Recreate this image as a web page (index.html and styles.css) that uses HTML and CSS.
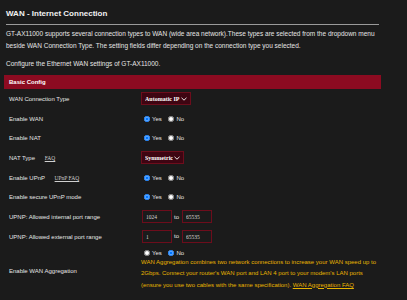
FILE: index.html
```html
<!DOCTYPE html>
<html>
<head>
  <meta charset="UTF-8">
  <title>WAN - Internet Connection</title>
  <link rel="stylesheet" href="styles.css">
</head>
<body>
  <div class="content">
    <h1 class="title">WAN - Internet Connection</h1>
    <hr class="rule">
    <p class="desc">GT-AX11000 supports several connection types to WAN (wide area network).These types are selected from the dropdown menu beside WAN Connection Type. The setting fields differ depending on the connection type you selected.</p>
    <p class="note">Configure the Ethernet WAN settings of GT-AX11000.</p>

    <table class="form-table">
      <thead>
        <tr><th colspan="2">Basic Config</th></tr>
      </thead>
      <tbody>
        <tr>
          <td class="label">WAN Connection Type</td>
          <td>
            <select class="select">
              <option selected>Automatic IP</option>
              <option>PPPoE</option>
              <option>Static IP</option>
            </select>
          </td>
        </tr>
        <tr>
          <td class="label">Enable WAN</td>
          <td>
            <input type="radio" name="wan" checked><span class="opt">Yes</span>
            <input type="radio" name="wan"><span class="opt">No</span>
          </td>
        </tr>
        <tr>
          <td class="label">Enable NAT</td>
          <td>
            <input type="radio" name="nat" checked><span class="opt">Yes</span>
            <input type="radio" name="nat"><span class="opt">No</span>
          </td>
        </tr>
        <tr>
          <td class="label">NAT Type <a class="faq" href="#">FAQ</a></td>
          <td>
            <select class="select">
              <option selected>Symmetric</option>
              <option>Fullcone</option>
            </select>
          </td>
        </tr>
        <tr>
          <td class="label">Enable UPnP <a class="faq" href="#">UPnP FAQ</a></td>
          <td>
            <input type="radio" name="upnp" checked><span class="opt">Yes</span>
            <input type="radio" name="upnp"><span class="opt">No</span>
          </td>
        </tr>
        <tr>
          <td class="label">Enable secure UPnP mode</td>
          <td>
            <input type="radio" name="secure" checked><span class="opt">Yes</span>
            <input type="radio" name="secure"><span class="opt">No</span>
          </td>
        </tr>
        <tr>
          <td class="label">UPNP: Allowed internal port range</td>
          <td>
            <input class="port" type="text" value="1024"><span class="to">to</span><input class="port" type="text" value="65535">
          </td>
        </tr>
        <tr>
          <td class="label">UPNP: Allowed external port range</td>
          <td>
            <input class="port" type="text" value="1"><span class="to">to</span><input class="port" type="text" value="65535">
          </td>
        </tr>
        <tr class="tall">
          <td class="label">Enable WAN Aggregation</td>
          <td>
            <div>
              <input type="radio" name="agg"><span class="opt">Yes</span>
              <input type="radio" name="agg" checked><span class="opt">No</span>
            </div>
            <div class="hint">WAN Aggregation combines two network connections to increase your WAN speed up to 2Gbps. Connect your router's WAN port and LAN 4 port to your modem's LAN ports (ensure you use two cables with the same specification). <a href="#">WAN Aggregation FAQ</a></div>
          </td>
        </tr>
      </tbody>
    </table>
  </div>
</body>
</html>
```

FILE: styles.css
```css
body {
  margin: 0;
  background-color: #1b1b1b;
  color: #e6e6e6;
  font-family: "Liberation Sans", Arial, sans-serif;
  font-size: 6px;
}

.content {
  width: 377px;
  padding: 9px 0 0 4px;
}

.title {
  margin: 0 2px;
  font-size: 8px;
  line-height: 10px;
  font-weight: bold;
  color: #f2f2f2;
}

.rule {
  margin: 5px 2px 0;
  border: 0;
  border-top: 1px solid #9a9a9a;
}

.desc {
  margin: 3px 2px 0;
  font-size: 6.5px;
  line-height: 12px;
}

.note {
  margin: 6px 2px 0;
  font-size: 6.5px;
  line-height: 12px;
}

.form-table {
  width: 100%;
  margin-top: 5px;
  border-collapse: collapse;
}

.form-table th {
  height: 14px;
  padding: 0 5px;
  background-color: #8c0b21;
  color: #fff;
  font-size: 6px;
  font-weight: bold;
  text-align: left;
}

.form-table td {
  height: 19.7px;
  padding: 0;
  vertical-align: middle;
}

.form-table td.label {
  width: 132px;
  padding-left: 5px;
}

.faq {
  margin-left: 8px;
  color: #d0d0d0;
  font-family: "Liberation Serif", serif;
  font-size: 5.5px;
}

.select {
  -webkit-appearance: none;
  appearance: none;
  height: 13px;
  margin: 0;
  padding: 0 10px 0 3px;
  border: 1px solid #6d0d1c;
  border-radius: 0;
  background-color: #3e0512;
  background-image: url("data:image/svg+xml,%3Csvg xmlns='http://www.w3.org/2000/svg' width='6' height='4' viewBox='0 0 6 4'%3E%3Cpath d='M0.5 0.8 3 3.2 5.5 0.8' fill='none' stroke='%23fff' stroke-width='0.9'/%3E%3C/svg%3E");
  background-repeat: no-repeat;
  background-position: right 3px center;
  color: #fff;
  font-family: "Liberation Serif", serif;
  font-size: 6px;
  font-weight: bold;
}

input[type="radio"] {
  width: 6px;
  height: 6px;
  margin: 0 2px 0 3px;
  vertical-align: -1px;
}

.opt {
  margin-right: 2px;
}

.port {
  width: 30px;
  height: 13px;
  box-sizing: border-box;
  margin: 0 0 0 1px;
  padding: 0 3px;
  border: 1px solid #6d0d1c;
  background: transparent;
  color: #d8d8d8;
  font-family: "Liberation Serif", serif;
  font-size: 5.5px;
  vertical-align: middle;
}

.to {
  margin: 0 2px;
}

.tall td {
  height: 48px;
}

.hint {
  margin-top: 1px;
  color: #e8b400;
  line-height: 11.3px;
}

.hint a {
  color: #e8b400;
}
```
